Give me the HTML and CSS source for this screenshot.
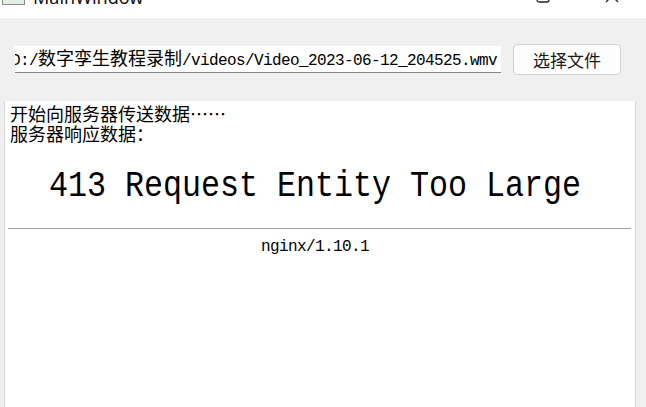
FILE: index.html
```html
<!DOCTYPE html>
<html lang="zh">
<head>
<meta charset="utf-8">
<title>MainWindow</title>
<link rel="stylesheet" href="styles.css">
</head>
<body>
<div class="window">
  <div class="titlebar">
    <div class="app-icon"></div>
    <div class="title">MainWindow</div>
    <div class="spacer"></div>
    <svg class="btn-max" width="14" height="14" viewBox="0 0 14 14"><rect x="1" y="1" width="12" height="12" rx="2" fill="none" stroke="#222" stroke-width="1.3"/></svg>
    <svg class="btn-close" width="14" height="14" viewBox="0 0 14 14"><path d="M1 1 L13 13 M13 1 L1 13" stroke="#222" stroke-width="1.3" fill="none"/></svg>
  </div>
  <div class="toolbar">
    <div class="lineedit"><div class="le-text"><span class="lat">D:/</span><span class="cjk">数字孪生教程录制</span><span class="lat">/videos/Video_2023-06-12_204525.wmv</span></div></div>
    <button class="pick">选择文件</button>
  </div>
  <div class="browser">
    <div class="line cjk">开始向服务器传送数据……</div>
    <div class="line cjk">服务器响应数据：</div>
    <div class="h1"><span class="h1-text">413 Request Entity Too Large</span></div>
    <div class="rule"></div>
    <div class="server lat">nginx/1.10.1</div>
  </div>
</div>
</body>
</html>
```

FILE: styles.css
```css
html, body {
  margin: 0;
  padding: 0;
}
body {
  width: 646px;
  height: 407px;
  overflow: hidden;
  background: #f0f0f0;
  font-family: "Noto Sans CJK SC", sans-serif;
  color: #000;
}
.window {
  display: flex;
  flex-direction: column;
  height: 407px;
}
.titlebar {
  height: 18px;
  background: #fff;
  display: flex;
  align-items: flex-start;
  overflow: hidden;
  flex: none;
}
.app-icon {
  width: 21px;
  height: 15px;
  margin: -12px 0 0 2px;
  border: 1px solid #8c8c8c;
  background: #e4efe4;
  flex: none;
}
.title {
  margin: -12px 0 0 8px;
  font-family: "Noto Sans", "Liberation Sans", sans-serif;
  font-size: 18px;
  line-height: 18px;
  color: #111;
}
.spacer { flex: 1; }
.btn-max {
  margin: -11px 0 0 0;
  flex: none;
}
.btn-close {
  margin: -11px 27px 0 55px;
  flex: none;
}
.toolbar {
  height: 83px;
  display: flex;
  align-items: center;
  gap: 12px;
  padding-left: 15px;
  flex: none;
}
.lineedit {
  width: 486px;
  height: 27px;
  box-sizing: border-box;
  background: #fff;
  border-bottom: 1px solid #868686;
  overflow: hidden;
  display: flex;
  justify-content: flex-end;
  align-items: center;
  padding-right: 4px;
}
.le-text {
  white-space: nowrap;
  flex: none;
  line-height: 20px;
  color: #000;
}
.lat {
  font-family: "Liberation Mono", monospace;
  font-size: 16px;
  letter-spacing: -0.6px;
}
.cjk {
  font-family: "Noto Sans CJK SC", sans-serif;
  font-size: 18px;
  letter-spacing: 0;
}
.pick {
  width: 108px;
  height: 31px;
  box-sizing: border-box;
  background: #fdfdfd;
  border: 1px solid #d0d0d0;
  border-radius: 4px;
  font-family: "Noto Sans CJK SC", sans-serif;
  font-size: 17px;
  color: #1a1a1a;
  padding: 0;
  line-height: 1;
}
.browser {
  flex: 1;
  margin-left: 4px;
  width: 632px;
  box-sizing: border-box;
  background: #fff;
  border-left: 1px solid #dcdcdc;
  border-right: 1px solid #dcdcdc;
  padding: 2px 15px 0 5px;
}
.line {
  line-height: 20px;
  white-space: nowrap;
}
.h1 {
  margin-top: 21px;
  display: flex;
  justify-content: center;
  font-family: "Liberation Mono", monospace;
  font-size: 37px;
  line-height: 44px;
  transform: scaleX(0.856);
  white-space: nowrap;
}
.h1-text {
  flex: none;
}
.rule {
  margin: 20px 0 0 -2px;
  width: 623px;
  border-top: 1px solid #a0a0a0;
}
.server {
  margin-top: 8px;
  text-align: center;
  line-height: 20px;
}
```
